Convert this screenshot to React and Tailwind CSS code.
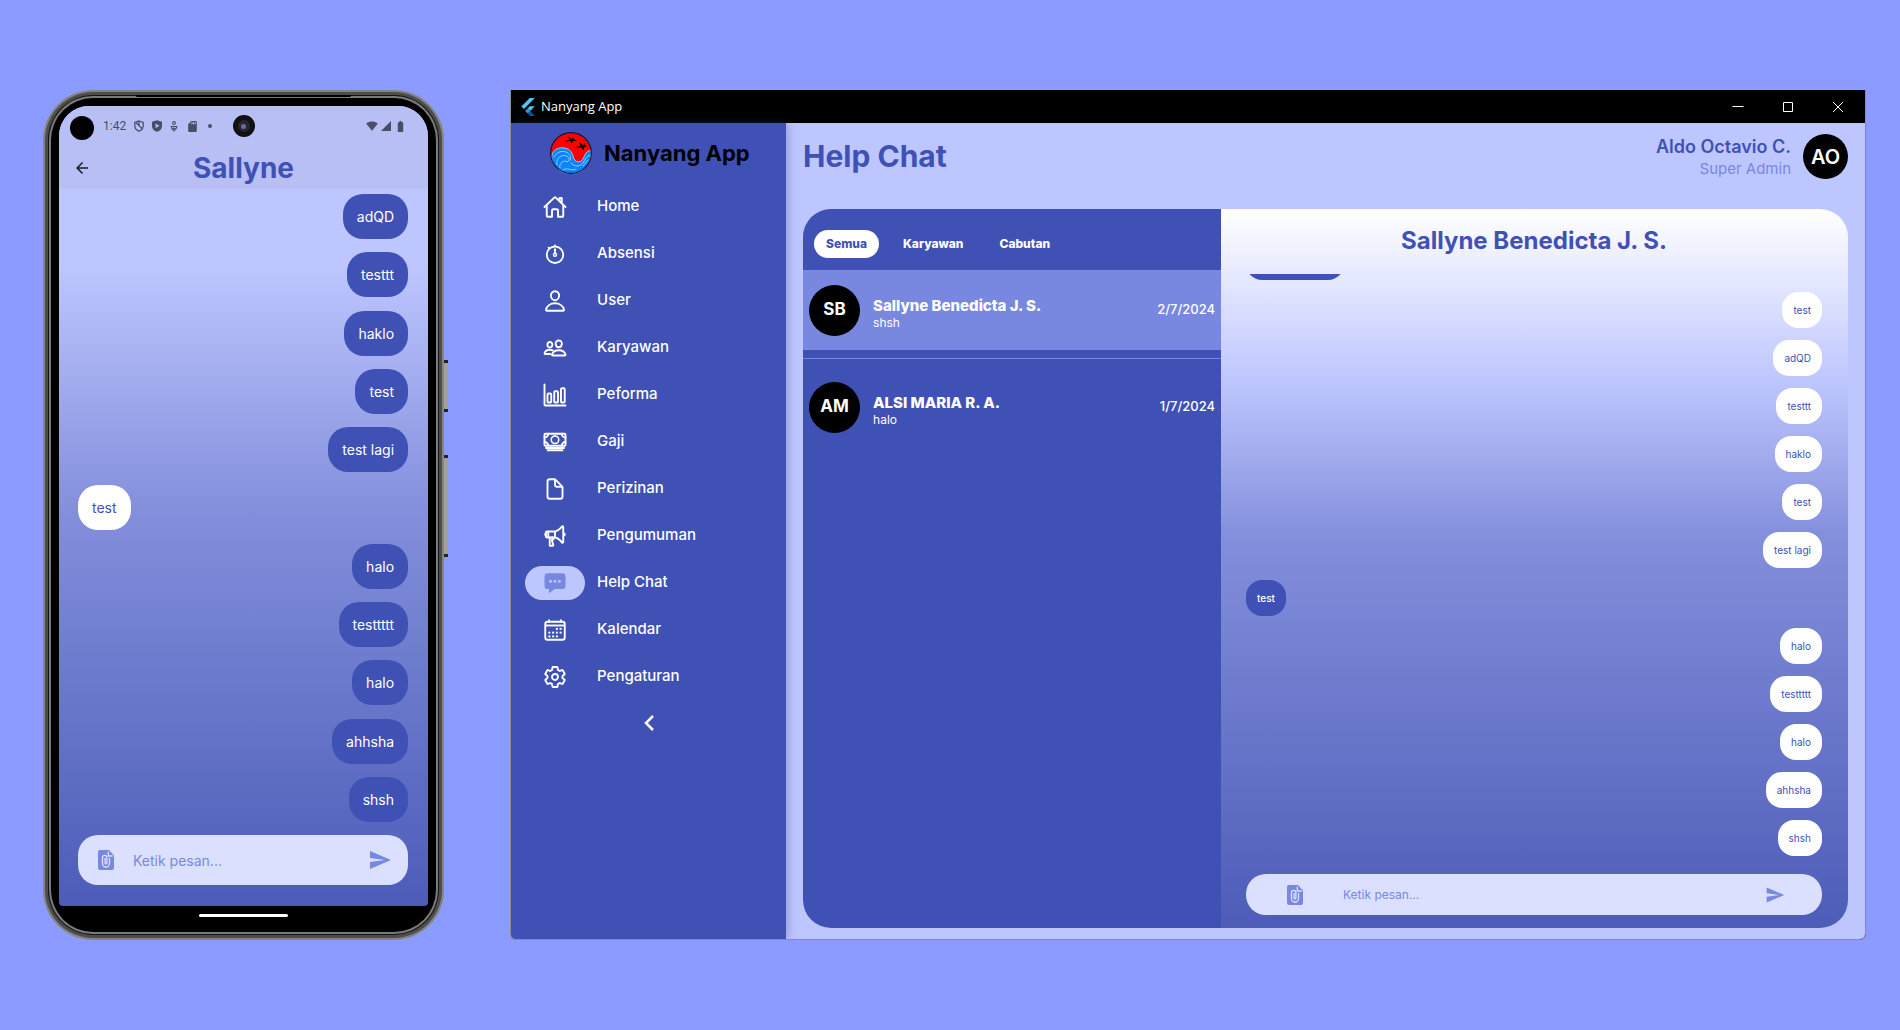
import React from "react";
import {
  IoHomeOutline,
  IoStopwatchOutline,
  IoPersonOutline,
  IoPeopleOutline,
  IoBarChartOutline,
  IoCashOutline,
  IoDocumentOutline,
  IoMegaphoneOutline,
  IoChatboxEllipses,
  IoCalendarOutline,
  IoSettingsOutline,
} from "react-icons/io5";
import {
  MdArrowBack,
  MdSend,
  MdSdCard,
  MdSignalWifi4Bar,
  MdSignalCellular4Bar,
  MdBatteryFull,
} from "react-icons/md";

const navItems = [
  { label: "Home", Icon: IoHomeOutline },
  { label: "Absensi", Icon: IoStopwatchOutline },
  { label: "User", Icon: IoPersonOutline },
  { label: "Karyawan", Icon: IoPeopleOutline },
  { label: "Peforma", Icon: IoBarChartOutline },
  { label: "Gaji", Icon: IoCashOutline },
  { label: "Perizinan", Icon: IoDocumentOutline },
  { label: "Pengumuman", Icon: IoMegaphoneOutline },
  { label: "Help Chat", Icon: IoChatboxEllipses, active: true },
  { label: "Kalendar", Icon: IoCalendarOutline },
  { label: "Pengaturan", Icon: IoSettingsOutline },
];

const thread = [
  { text: "adQD" },
  { text: "testtt" },
  { text: "haklo" },
  { text: "test" },
  { text: "test lagi" },
  { text: "test", other: true },
  { text: "halo" },
  { text: "testtttt" },
  { text: "halo" },
  { text: "ahhsha" },
  { text: "shsh" },
];

const conversations = [
  { initials: "SB", name: "Sallyne Benedicta J. S.", last: "shsh", date: "2/7/2024", selected: true },
  { initials: "AM", name: "ALSI MARIA R. A.", last: "halo", date: "1/7/2024" },
];

function FileClipIcon() {
  return (
    <svg viewBox="0 0 16 20" className="h-5 w-4" aria-hidden="true">
      <path d="M2 0h9l5 5.500V18a2 2 0 0 1-2 2H2a2 2 0 0 1-2-2V2a2 2 0 0 1 2-2Z" fill="currentColor" />
      <path d="M10.300 1.500V6h4.500" fill="none" stroke="#dce0ff" strokeWidth="1.300" />
      <path d="M11.500 8v5.500a3.500 3.500 0 0 1-7 0V7.500a2.200 2.200 0 0 1 4.400 0V13a.9.9 0 0 1-1.800 0V8" fill="none" stroke="#dce0ff" strokeWidth="1.300" />
    </svg>
  );
}

function ShieldOffIcon() {
  return (
    <svg viewBox="0 0 12 14" className="h-3 w-[10px]" fill="none" stroke="currentColor" strokeWidth="1.5" aria-hidden="true">
      <path d="M6 1 11 2.600V7c0 2.900-2 5-5 6.200C3 12 1 9.900 1 7V2.600Z" />
      <path d="M2 2.500 10 10.500M6 1v5.500" />
    </svg>
  );
}

function ShieldPlayIcon() {
  return (
    <svg viewBox="0 0 12 14" className="h-3 w-[10px]" fill="currentColor" aria-hidden="true">
      <path fillRule="evenodd" d="M6 0 12 2v5c0 3.400-2.500 6-6 7-3.500-1-6-3.600-6-7V2ZM4.300 4v5.600L9 6.800Z" />
    </svg>
  );
}

function CareIcon() {
  return (
    <svg viewBox="0 0 10 14" className="h-[11px] w-2" fill="none" stroke="currentColor" strokeWidth="1.400" aria-hidden="true">
      <circle cx="5" cy="2.600" r="1.800" />
      <path d="M.8 7h8.400M1.500 7c0 3 1.500 4 3.500 5.600C7 11 8.500 10 8.500 7M3.400 8.800 5 10.200l1.600-1.400" />
    </svg>
  );
}

function FlutterLogo() {
  return (
    <svg viewBox="0 0 14 18" className="h-[18px] w-[14px]" aria-hidden="true">
      <path d="M8.800 0H13.800L3 11 .3 8.600Z" fill="#54c5f8" />
      <path d="M8.800 8.200H13.800L9.400 12.800 6.800 10.400Z" fill="#54c5f8" />
      <path d="m4.200 13 2.600-2.600L9.400 13l-2.600 2.600Z" fill="#29a0e0" />
      <path d="m6.800 15.600 2.600-2.600 4.400 5H9Z" fill="#01579b" />
    </svg>
  );
}

function NanyangLogo() {
  return (
    <svg viewBox="0 0 42 42" className="size-[42px]" aria-hidden="true">
      <circle cx="21" cy="21" r="20.500" fill="#ff0000" />
      <path
        d="M1.700 27C1 19 7 15.500 13 15.800c6 .3 9 4 10 8.200.7 3.500 2.500 5.800 5.500 5.800 4.500 0 5-4.800 7-8 1.600-2.500 3.800-3.300 5.800-3.300C42.500 31 33.500 41.500 21 41.500 11 41.500 3.500 35 1.700 27Z"
        fill="#0a84ff"
        stroke="#b9dcff"
        strokeWidth=".8"
      />
      <g fill="none" stroke="#b5daff" strokeWidth=".8" strokeLinecap="round">
        <path d="M4 25c2-4 7-7 12-5 4 1.600 5 5 4.500 8" />
        <path d="M7 33c-1-5 2-9.500 7-9.500 3 0 5.500 2 5 4.500-.4 2-3 2.400-4 1" />
        <path d="M10 36c-1-3 1-6.500 4-6.500M13 38c4-3 8 1 13-.5" />
        <path d="M21 31c3 4 9 4 12 0 2-3 3-7 7-8" />
        <path d="M33 34c2-2 3-5 5-6" />
      </g>
      <g fill="#000">
        <path d="m15 9 5-1-2.500-4 4 3 2-2-.5 3 4 .5-4 .5-1.500 3-1-3L15 9.500Z" />
        <path d="m26 15 4.500-1-1-4 3 3.300 3-2.300-1.500 3 3 1-3 .2-.5 3.300-2-3L26 15.500Z" />
        <path d="m21.500 7 6 1.200-5 .6ZM32 13l5 .5-4 1.600Z" />
      </g>
      <circle cx="21" cy="21" r="20.400" fill="none" stroke="#10153a" strokeWidth="1.200" />
    </svg>
  );
}

function Phone() {
  return (
    <section aria-label="Phone" className="relative flex w-[22%] min-w-[340px] shrink-0">
      <div className="absolute top-[270px] -right-1 h-[52px] w-1 border-y-[3px] border-[#222] bg-[#a3a09a]" />
      <div className="absolute top-[365px] -right-1 h-[102px] w-1 border-y-[3px] border-[#222] bg-[#a3a09a]" />
      <div className="flex flex-1 rounded-[50px] bg-[#85857f] p-[2px]">
        <div className="flex flex-1 rounded-[48px] bg-[#4c4d4d] p-[3px]">
          <div className="flex flex-1 rounded-[45px] bg-[#141414] p-[1px]">
            <div className="flex flex-1 rounded-[44px] bg-[#7b7b7b] p-[2px]">
              <div className="relative flex flex-1 flex-col rounded-[42px] bg-black px-2 pt-2">
                <div className="absolute -top-[3px] left-[22%] h-[2px] w-[56%] rounded-full bg-black" />
                <div className="relative flex flex-1 flex-col overflow-hidden rounded-t-[30px] rounded-b-[4px] bg-linear-to-b from-[#bec6ff] from-20% via-[#8490dc] via-50% to-[#4d5cb8]">
                  <div className="bg-[#b7bff5]">
                    <div className="flex h-10 items-center pr-[21px] pl-[11px] text-[#4a4d68]">
                      <span className="mt-1 size-6 rounded-full bg-black" />
                      <span className="ml-[9px] font-['Roboto',sans-serif] text-[12px]">1:42</span>
                      <span className="ml-2 flex items-center gap-2">
                        <ShieldOffIcon />
                        <ShieldPlayIcon />
                        <CareIcon />
                        <MdSdCard className="size-[13px]" />
                        <span className="ml-px size-1 rounded-full bg-current" />
                      </span>
                      <span className="ml-auto flex items-center gap-[2px]">
                        <MdSignalWifi4Bar className="size-3" />
                        <MdSignalCellular4Bar className="size-3" />
                        <MdBatteryFull className="size-[13px]" />
                      </span>
                    </div>
                    <div className="grid h-[43px] grid-cols-[46px_1fr_46px] items-center">
                      <button type="button" aria-label="Back" className="ml-[14px] text-[#1b1d2e]">
                        <MdArrowBack className="size-[18px]" />
                      </button>
                      <h1 className="text-center text-[28px] leading-9 font-bold text-[#3f51b5]">Sallyne</h1>
                    </div>
                  </div>
                  <span className="absolute top-[9px] left-1/2 flex size-[22px] -translate-x-1/2 items-center justify-center rounded-full bg-[#111]">
                    <span className="flex size-3 items-center justify-center rounded-full bg-[#262438]">
                      <span className="size-[5px] rounded-full bg-[#6a6d98]" />
                    </span>
                  </span>
                  <ul className="flex flex-1 flex-col justify-between pt-[5px] pr-5 pb-[13px] pl-[19px]">
                    {thread.map((m, i) => (
                      <li
                        key={i}
                        className={
                          m.other
                            ? "flex h-[45px] items-center self-start rounded-[20px] bg-white px-[14px] text-[14px] text-[#3f51b5]"
                            : "flex h-[45px] items-center self-end rounded-[20px] bg-[#3f51b5] px-[14px] text-[14px] text-white"
                        }
                      >
                        {m.text}
                      </li>
                    ))}
                  </ul>
                  <form className="mr-5 mb-[21px] ml-[19px] flex h-[50px] items-center rounded-[20px] bg-[#dce0ff] pr-4 pl-5 text-[#7888e1]">
                    <button type="button" aria-label="Attach file">
                      <FileClipIcon />
                    </button>
                    <input
                      aria-label="Message"
                      placeholder="Ketik pesan..."
                      className="ml-[19px] min-w-0 flex-1 bg-transparent text-[14px] outline-none placeholder:text-[#7888e1]"
                    />
                    <button type="button" aria-label="Send">
                      <MdSend className="size-6" />
                    </button>
                  </form>
                </div>
                <div className="flex h-[26px] items-start justify-center pt-2">
                  <span className="h-[3px] w-[89px] rounded-full bg-white" />
                </div>
              </div>
            </div>
          </div>
        </div>
      </div>
    </section>
  );
}

function TitleBar() {
  return (
    <div className="flex h-[33px] items-center bg-black pr-[21px] pl-[10px] text-white">
      <FlutterLogo />
      <span className="ml-[6px] font-['Open_Sans',sans-serif] text-[13px]">Nanyang App</span>
      <div className="ml-auto flex gap-[38px]">
        <button type="button" aria-label="Minimize">
          <svg viewBox="0 0 12 12" className="size-3" stroke="currentColor" fill="none"><path d="M.5 5.500h11" /></svg>
        </button>
        <button type="button" aria-label="Maximize">
          <svg viewBox="0 0 12 12" className="size-3" stroke="currentColor" fill="none"><path d="M1.500 1.500h9v9h-9Z" /></svg>
        </button>
        <button type="button" aria-label="Close">
          <svg viewBox="0 0 12 12" className="size-3" stroke="currentColor" fill="none"><path d="m1 1 10 10M11 1 1 11" /></svg>
        </button>
      </div>
    </div>
  );
}

function Sidebar() {
  return (
    <aside className="relative w-[275px] shrink-0 bg-[#3f51b5] shadow-[2px_0_8px_rgba(60,70,140,0.35)]">
      <div className="flex h-15 items-center gap-3 pl-[39px]">
        <NanyangLogo />
        <span className="text-[22px] font-bold text-black">Nanyang App</span>
      </div>
      <nav>
        {navItems.map(({ label, Icon, active }) => (
          <a key={label} href="#" className="flex h-[47px] items-center gap-3 pl-[14px] text-white">
            <span
              className={
                active
                  ? "flex h-[34px] w-15 items-center justify-center rounded-full bg-[#bec6ff] text-[#7888e1]"
                  : "flex h-[34px] w-15 items-center justify-center [&_ellipse]:stroke-[40px] [&_path]:stroke-[40px] [&_rect]:stroke-[40px]"
              }
            >
              <Icon className="size-6" />
            </span>
            <span className="text-[15px] font-medium">{label}</span>
          </a>
        ))}
      </nav>
      <button type="button" aria-label="Collapse menu" className="flex h-[46px] w-full items-center justify-center text-white">
        <svg viewBox="0 0 10 16" className="h-4 w-[10px]" fill="none" stroke="currentColor" strokeWidth="2.500"><path d="M9 1 2 8l7 7" /></svg>
      </button>
    </aside>
  );
}

function ConversationList() {
  return (
    <div className="w-2/5 bg-[#3f51b5] text-white">
      <div className="flex h-[61px] items-start gap-3 px-[11px] pt-[21px] text-[12px] font-extrabold">
        <button type="button" className="h-7 rounded-full bg-white px-3 text-[#3f51b5]">Semua</button>
        <button type="button" className="h-7 px-3">Karyawan</button>
        <button type="button" className="h-7 px-3">Cabutan</button>
      </div>
      <ul className="flex flex-col gap-2">
        {conversations.map((c) => (
          <li key={c.initials} className={c.selected ? "" : "border-t border-[#7888e1] pt-2"}>
            <button
              type="button"
              className={
                c.selected
                  ? "flex h-20 w-full items-center gap-[13px] bg-[#7888e1] px-[6px] text-left"
                  : "flex h-20 w-full items-center gap-[13px] px-[6px] text-left"
              }
            >
              <span className="flex size-[51px] items-center justify-center rounded-full bg-black text-[17px] font-bold">{c.initials}</span>
              <span className="flex flex-1 flex-col pt-[6px]">
                <span className="text-[15px] leading-[19px] font-extrabold">{c.name}</span>
                <span className="text-[12px] leading-4">{c.last}</span>
              </span>
              <span className="text-[13px] font-medium">{c.date}</span>
            </button>
          </li>
        ))}
      </ul>
    </div>
  );
}

function ChatPanel() {
  return (
    <div className="flex w-3/5 flex-col bg-[linear-gradient(to_bottom,#ffffff_0%,#bec6ff_24%,#8490dc_45%,#4d5cb8_100%)] pr-[26px] pl-[25px]">
      <h2 className="pt-4 text-center text-[24px] leading-8 font-bold text-[#3f51b5]">Sallyne Benedicta J. S.</h2>
      <ul className="mt-[17px] flex min-h-0 grow basis-0 flex-col justify-end gap-3 overflow-hidden pb-[18px]">
        <li aria-hidden="true" className="h-9 w-[98px] shrink-0 rounded-[16px] bg-[#3f51b5]" />
        {[{ text: "test" }, ...thread].map((m, i) => (
          <li
            key={i}
            className={
              m.other
                ? "flex h-9 shrink-0 items-center self-start rounded-[16px] bg-[#3f51b5] px-[11px] text-[10px] font-medium text-white"
                : "flex h-9 shrink-0 items-center self-end rounded-[16px] bg-white px-[11px] text-[10px] text-[#3f51b5]"
            }
          >
            {m.text}
          </li>
        ))}
      </ul>
      <form className="mb-[13px] flex h-[41px] items-center rounded-[20px] bg-[#dce0ff] pr-[37px] pl-[41px] text-[#7888e1]">
        <button type="button" aria-label="Attach file">
          <FileClipIcon />
        </button>
        <input
          aria-label="Message"
          placeholder="Ketik pesan..."
          className="ml-10 min-w-0 flex-1 bg-transparent text-[12px] outline-none placeholder:text-[#7888e1]"
        />
        <button type="button" aria-label="Send">
          <MdSend className="size-5" />
        </button>
      </form>
    </div>
  );
}

function DesktopWindow() {
  return (
    <section aria-label="Nanyang App" className="flex min-w-0 flex-1 flex-col overflow-hidden rounded-b-[6px] border-x border-b border-[#8a8c9c] bg-black">
      <TitleBar />
      <div className="flex flex-1 bg-[#bec6ff]">
        <Sidebar />
        <main className="flex min-w-0 flex-1 flex-col px-[17px] pb-[11px]">
          <header className="flex h-[67px] items-center justify-between">
            <h1 className="text-[30px] font-bold text-[#3f51b5]">Help Chat</h1>
            <div className="flex items-center gap-3">
              <div className="text-right">
                <p className="text-[18px] leading-6 font-semibold text-[#3f51b5]">Aldo Octavio C.</p>
                <p className="text-[15px] leading-5 text-[#7888e1]">Super Admin</p>
              </div>
              <span className="flex size-[45px] items-center justify-center rounded-full bg-black text-[20px] font-semibold text-white">AO</span>
            </div>
          </header>
          <div className="mt-[19px] flex flex-1 overflow-hidden rounded-[28px]">
            <ConversationList />
            <ChatPanel />
          </div>
        </main>
      </div>
    </section>
  );
}

export default function App() {
  return (
    <div className="flex min-h-screen gap-[66px] bg-[#8b9bff] py-[90px] pr-[34px] pl-[43px] font-['Inter',sans-serif]">
      <Phone />
      <DesktopWindow />
    </div>
  );
}
